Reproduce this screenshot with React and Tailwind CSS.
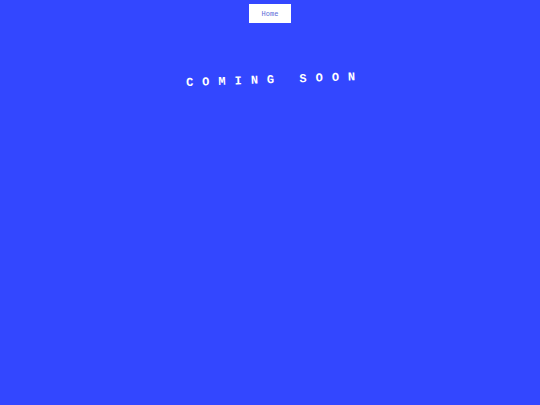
import React from 'react';

const App = () => {
    return (
        <div className="w-[540px] h-[405px] bg-[#3347ff] flex flex-col items-center" style={{ fontFamily: '"Liberation Mono", monospace' }}>
            {/* Nav */}
            <a href="#" className="mt-[4px] w-[42px] h-[19px] bg-white flex items-center justify-center pt-[1px] text-[7px] text-[#5a6bd8] leading-none">
                Home
            </a>

            {/* Heading */}
            <h1 className="mt-[51px] ml-[10px] text-[12px] font-bold text-white tracking-[9px] whitespace-pre -rotate-2 leading-none">
                COMING SOON
            </h1>
        </div>
    );
};

export default App;
